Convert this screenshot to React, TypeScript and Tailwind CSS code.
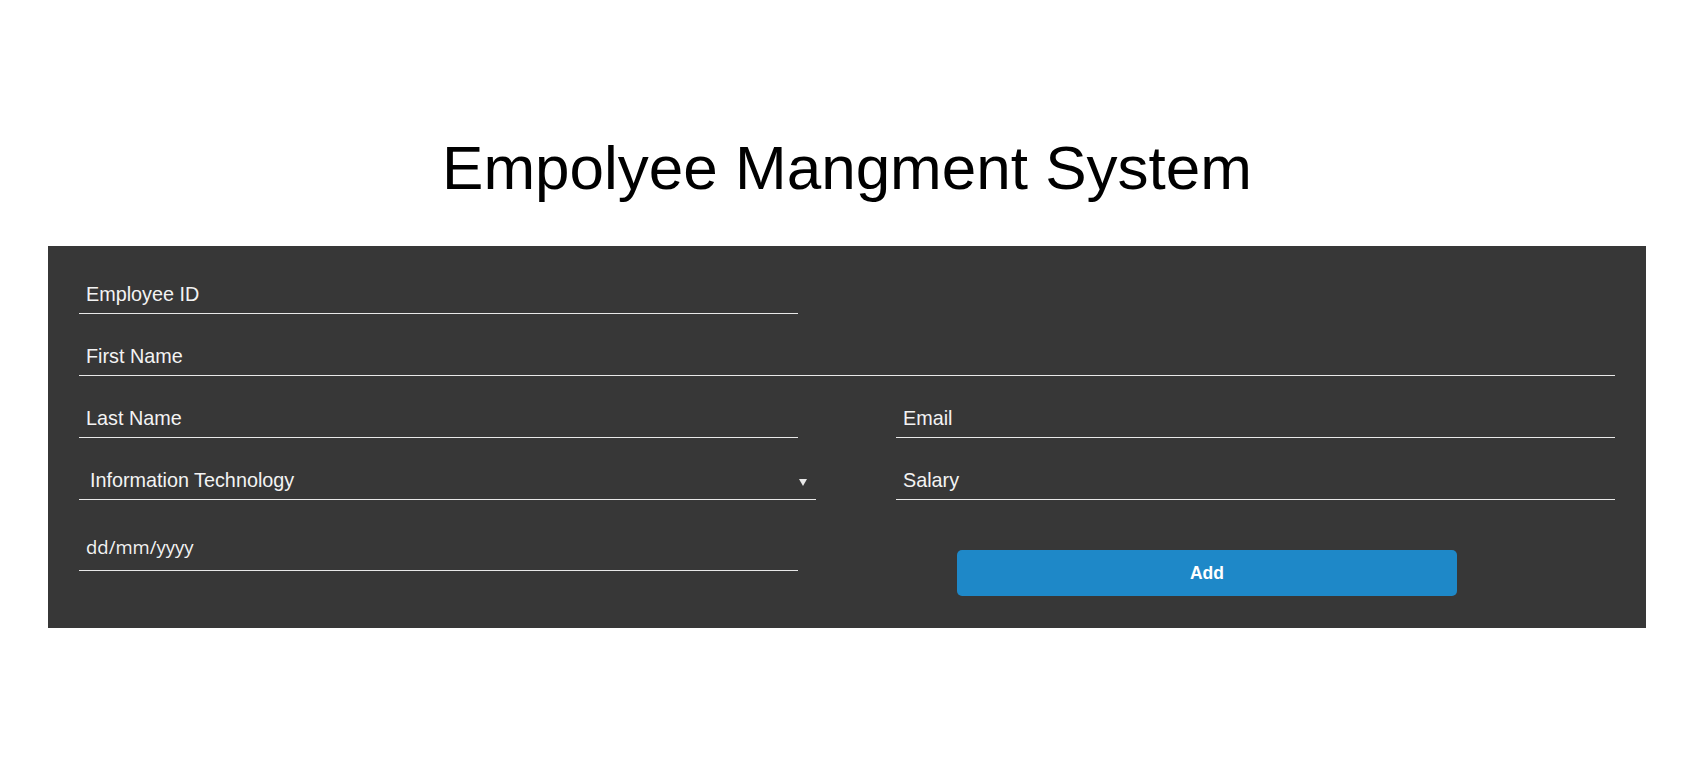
import React from "react";

const field =
  "block h-[37px] w-[719px] border-0 border-b border-solid border-[#e8e8e8] bg-transparent pb-[2px] pl-[7px] text-[19.8px] text-[#f3f3f3] outline-none placeholder:text-[#f3f3f3]";

export default function App() {
  return (
    <div
      className="min-h-screen w-full bg-white"
      style={{ fontFamily: '"Liberation Sans", Arial, sans-serif' }}
    >
      <div className="ml-[48px] w-[1598px]">
        <h1 className="pt-[137px] text-center text-[62px] font-normal leading-none text-black">
          Empolyee Mangment System
        </h1>
        <form
          className="mt-[47px] flex flex-col gap-[25px] bg-[#373737] px-[31px] pb-[32px] pt-[31px]"
          onSubmit={(e) => e.preventDefault()}
        >
          <div className="flex">
            <input className={field} placeholder="Employee ID" />
          </div>
          <div className="flex">
            <input className={field + " !w-[1536px]"} placeholder="First Name" />
          </div>
          <div className="flex justify-between">
            <input className={field} placeholder="Last Name" />
            <input className={field} placeholder="Email" />
          </div>
          <div className="flex justify-between">
            <div className="flex h-[37px] w-[737px] items-center justify-between border-b border-[#e8e8e8] pl-[11px] pr-[9px] text-[19.8px] text-[#f3f3f3]">
              <span>Information Technology</span>
              <svg width="8" height="7" viewBox="0 0 8 7" className="mt-[2px]">
                <path d="M0 0 L8 0 L4 7 Z" fill="#e8e8e8" />
              </svg>
            </div>
            <input className={field} placeholder="Salary" />
          </div>
          <div className="flex justify-between">
            <div
              className="flex h-[46px] w-[719px] items-center border-b border-[#e8e8e8] pb-[1px] pl-[7px] text-[18.5px] text-[#f3f3f3]"
              style={{ fontFamily: '"Open Sans", sans-serif' }}
            >
              dd/mm/yyyy
            </div>
            <div className="flex w-[719px] items-start pt-[25px]">
              <button
                type="submit"
                className="ml-[61px] h-[46px] w-[500px] rounded-[5px] bg-[#1e88c8] text-[17.5px] font-bold text-white"
              >
                Add
              </button>
            </div>
          </div>
        </form>
      </div>
    </div>
  );
}
